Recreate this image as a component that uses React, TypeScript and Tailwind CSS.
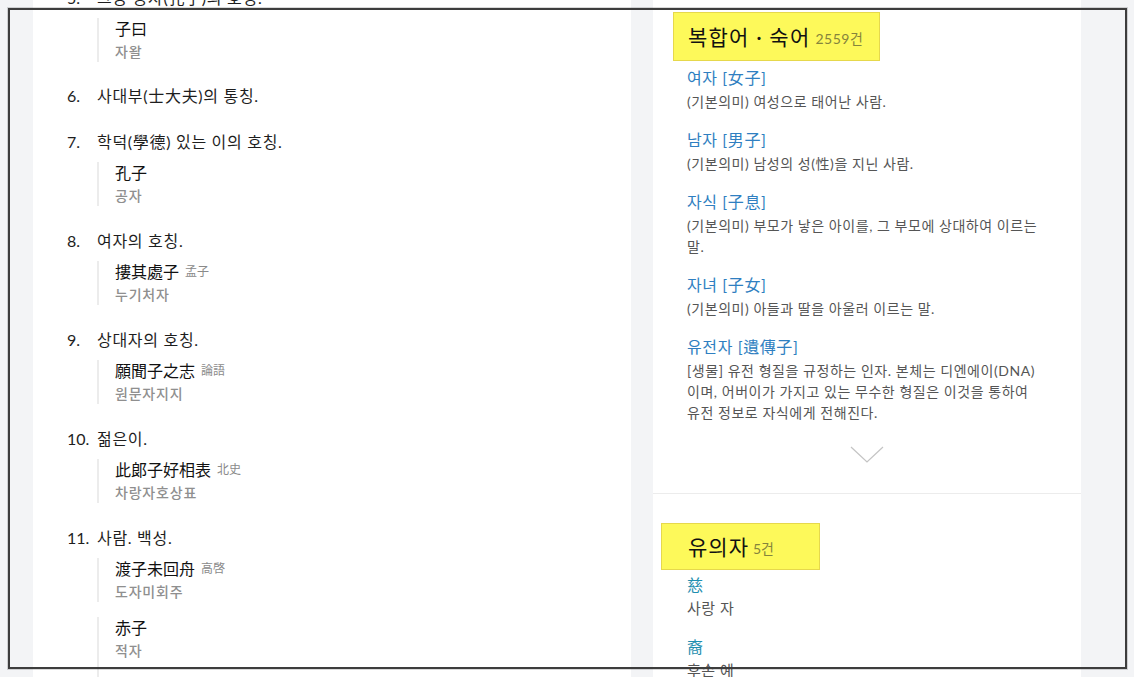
import React from "react";

type Ex = { han: string; src?: string; ko: string };
type Item = { n: string; text: string; ex?: Ex[] };

const items: Item[] = [
  { n: "5.", text: "그중 공자(孔子)의 호칭.", ex: [{ han: "子曰", ko: "자왈" }] },
  { n: "6.", text: "사대부(士大夫)의 통칭." },
  { n: "7.", text: "학덕(學德) 있는 이의 호칭.", ex: [{ han: "孔子", ko: "공자" }] },
  { n: "8.", text: "여자의 호칭.", ex: [{ han: "摟其處子", src: "孟子", ko: "누기처자" }] },
  { n: "9.", text: "상대자의 호칭.", ex: [{ han: "願聞子之志", src: "論語", ko: "원문자지지" }] },
  { n: "10.", text: "젊은이.", ex: [{ han: "此郞子好相表", src: "北史", ko: "차랑자호상표" }] },
  {
    n: "11.",
    text: "사람. 백성.",
    ex: [
      { han: "渡子未回舟", src: "高啓", ko: "도자미회주" },
      { han: "赤子", ko: "적자" },
    ],
  },
];

const words = [
  { w: "여자 [女子]", d: ["(기본의미) 여성으로 태어난 사람."] },
  { w: "남자 [男子]", d: ["(기본의미) 남성의 성(性)을 지닌 사람."] },
  { w: "자식 [子息]", d: ["(기본의미) 부모가 낳은 아이를, 그 부모에 상대하여 이르는", "말."] },
  { w: "자녀 [子女]", d: ["(기본의미) 아들과 딸을 아울러 이르는 말."] },
  {
    w: "유전자 [遺傳子]",
    d: [
      "[생물] 유전 형질을 규정하는 인자. 본체는 디엔에이(DNA)",
      "이며, 어버이가 가지고 있는 무수한 형질은 이것을 통하여",
      "유전 정보로 자식에게 전해진다.",
    ],
  },
];

const syn = [
  { h: "慈", d: "사랑 자" },
  { h: "裔", d: "후손 예" },
];

const font = { fontFamily: 'Lato, "Noto Sans CJK KR", "Noto Sans", sans-serif' };

export default function App() {
  return (
    <div className="relative w-[1134px] h-[677px] overflow-hidden bg-[#f3f4f6] flex" style={font}>
      {/* left panel */}
      <div className="ml-[33px] w-[598px] h-full bg-white overflow-hidden">
        <div className="-mt-[14px] pl-[34px] flex flex-col gap-[22px]">
          {items.map((it, i) => (
            <div key={it.n} className={i >= 3 ? "flex flex-col pt-[1px]" : "flex flex-col"}>
              <div className="flex h-[24px] items-center text-[16px] text-[#1e1e1e]">
                <span className="w-[30px] shrink-0">{it.n}</span>
                <span className="tracking-[0.7px]">{it.text}</span>
              </div>
              {it.ex && (
                <div className="mt-[8px] ml-[30px] flex flex-col gap-[15px]">
                  {it.ex.map((e) => (
                    <div key={e.han} className="border-l-2 border-[#ececec] pl-[16px] flex flex-col">
                      <div className="h-[22px] flex items-center text-[16px] text-[#111]">
                        <span>{e.han}</span>
                        {e.src && <span className="ml-[6px] text-[12px] text-[#8a8a8a]">{e.src}</span>}
                      </div>
                      <div className="h-[21px] mt-[1px] flex items-center text-[14px] tracking-[0.8px] text-[#8f8f8f] font-medium">
                        {e.ko}
                      </div>
                    </div>
                  ))}
                  {it.n === "11." && <div className="-mt-[15px] h-[40px] border-l-2 border-[#ececec]" />}
                </div>
              )}
            </div>
          ))}
        </div>
      </div>

      {/* right panel */}
      <div className="ml-[22px] w-[428px] h-full bg-white flex flex-col overflow-hidden">
        <div className="shrink-0 pt-[12px] h-[494px] border-b border-[#ececec] flex flex-col">
          <div className="ml-[20px] self-start h-[49px] flex items-center bg-[#fdf95a] border border-[#e6d84c] pl-[14px] pr-[16px]">
            <span className="text-[21px] tracking-[1.2px] text-[#111]">복합어 · 숙어</span>
            <span className="ml-[5px] mt-[3px] text-[14px] tracking-[0.5px] text-[#85843c]">2559건</span>
          </div>
          <div className="mt-[5px] pl-[34px] flex flex-col gap-[16px]">
            {words.map((x) => (
              <div key={x.w} className="flex flex-col">
                <div className="h-[24px] flex items-center text-[16px] tracking-[0.6px] text-[#2f7fc1]">{x.w}</div>
                <div className="mt-[1px] flex flex-col text-[14px] tracking-[0.55px] text-[#555]">
                  {x.d.map((l) => (
                    <div key={l} className="h-[21px] flex items-center whitespace-nowrap">{l}</div>
                  ))}
                </div>
              </div>
            ))}
          </div>
          <div className="mt-[23px] flex justify-center">
            <svg width="34" height="18" viewBox="0 0 34 18" fill="none">
              <path d="M1 1 L17 16 L33 1" stroke="#c4c4c4" strokeWidth="1.2" />
            </svg>
          </div>
        </div>
        <div className="shrink-0 pt-[29px] flex flex-col">
          <div className="ml-[8px] self-start h-[47px] flex items-center bg-[#fdf95a] border border-[#e6d84c] pl-[26px] pr-[45px]">
            <span className="text-[21px] tracking-[1px] text-[#111]">유의자</span>
            <span className="ml-[4px] mt-[3px] text-[14px] text-[#85843c]">5건</span>
          </div>
          <div className="mt-[3px] pl-[34px] flex flex-col gap-[16px]">
            {syn.map((s) => (
              <div key={s.h} className="flex flex-col">
                <div className="h-[24px] flex items-center text-[16px] text-[#1f8fb0]">{s.h}</div>
                <div className="mt-[1px] h-[21px] flex items-center text-[15px] tracking-[0.5px] text-[#555]">{s.d}</div>
              </div>
            ))}
          </div>
        </div>
      </div>

      {/* overlay frame */}
      <div className="absolute left-[8px] top-[8px] w-[1119px] h-[661px] border-2 border-[#3d3d3d] shadow-[0_0_0_1px_rgba(0,0,0,0.15)] pointer-events-none" />
    </div>
  );
}
